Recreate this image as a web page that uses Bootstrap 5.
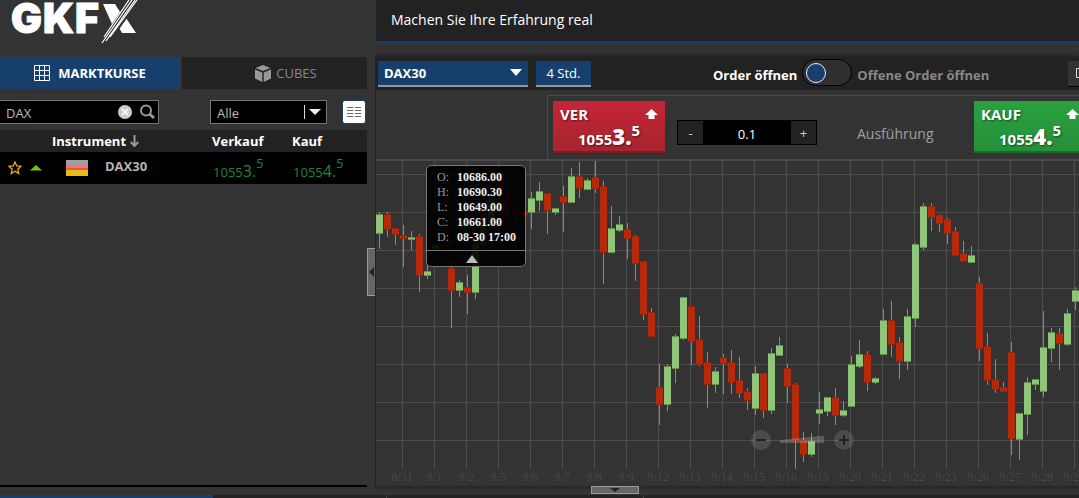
<!DOCTYPE html>
<html lang="de">
<head>
<meta charset="utf-8">
<meta name="viewport" content="width=device-width, initial-scale=1">
<title>GKFX – DAX30</title>
<link href="https://cdn.jsdelivr.net/npm/bootstrap@5.3.0/dist/css/bootstrap.min.css" rel="stylesheet">
<style>
:root{--blue:#163f6d;--bar:#222;--base:#333;--line:#4a4a4a}
body{background:var(--base);color:#fff;font:13px/18px "Open Sans",sans-serif;overflow-x:hidden}
button,input,select{font:inherit;color:inherit;border-radius:0}
svg{display:block}
.side{width:367px;flex:none}
.brandbox{height:57px}
.gutter{width:8px;flex:none}
.tabs{gap:2px}
.tabs button{border:0;height:32px;background:var(--bar);color:#888;flex:1;padding-left:28px}
.tabs button.active{flex:0 0 180px;background:var(--blue);color:#fff;font-weight:700;padding-left:6px}
.filters{padding:11px 1px 6px 0}
.search{width:159px;height:24px;background:#000;border:1px solid #777;border-left:0}
.search input{width:118px;background:none;border:0;padding:4px 6px 2px;color:#bbb;outline:0}
.pick{width:117px;height:24px;background:#000;border:1px solid #777}
.pick select{appearance:none;background:none;border:0;width:93px;padding:3px 6px 1px;color:#bbb}
.viewbtn{width:24px;height:24px;border:1px solid var(--blue);border-radius:3px!important;background:#fff;padding:0;margin-left:15px}
.quotes{table-layout:fixed;width:100%}
.quotes th{background:var(--bar);height:22px;padding:0;font-weight:700}
.quotes td{background:#000;height:32px;padding:0;vertical-align:middle}
.quotes .flag{padding-left:14px}
.quotes .name{color:#b4b4b4;font-weight:700;padding-bottom:4px}
.quotes .rate{color:#22862f;white-space:nowrap;line-height:20px;padding:6px 0 0 1px}
.rate b{font-weight:400;font-size:16px}
.rate sup{font-size:13px;top:-9px}
.side-end{height:2px;background:#000;margin-bottom:8px}
.news{height:43px;background:var(--bar);border-bottom:2px solid var(--blue);font-size:14px;padding:11px 15px;margin-left:1px}
.desk{margin-top:14px;border-left:1px solid #222;box-shadow:0 0 4px #111}
.tools{height:33px;background:var(--bar);padding-left:2px}
.tools .drop{height:26px;background:var(--blue);border:0;border-bottom:2px solid #999;padding:0 6px}
.symbol{width:150px;font-weight:700}
.period{width:55px;margin-left:8px}
.toggle{appearance:none;width:50px;height:27px;border:1px solid #000;border-radius:14px;background:#303030;margin:0 5px 2px;display:flex;align-items:center;padding:0 3px}
.toggle::before{content:"";width:20px;height:20px;border-radius:50%;background:var(--blue);border:1px solid #eee}
.modes{font-weight:700;margin-left:122px;white-space:nowrap}
.modes label,.modes span{padding-top:2px}
.winbtn{width:32px;height:26px;background:#333;border:0;border-bottom:1px solid #000;margin-left:79px;padding:0 8px;flex:none}
.order{height:64px;margin-left:171px;margin-top:5px;border:1px solid var(--line);border-width:1px 0 0 1px;padding:5px 0 0 5px;overflow:hidden}
.deal{width:112px;height:52px;border:0;padding:0 7px;flex:none;text-align:left;text-shadow:1px 1px 2px #0008;font-weight:700}
.sell{background:linear-gradient(#c72438,#a5252f);border-bottom:2px solid #7e1b22}
.buy{background:linear-gradient(#2aa13f,#24903a);border-bottom:2px solid #196b28}
.deal .side-name{font-size:15px;line-height:20px}
.deal .price{font-size:15px;line-height:20px;padding:2px 0 0 18px;white-space:nowrap}
.price b{font-size:22px}
.price sup{font-size:15px;top:-9px}
.stepper{width:140px;height:25px;margin:19px 40px 0 12px;border:1px solid #000;flex:none}
.stepper button{width:25px;border:0;background:var(--bar);padding:0;color:#ccc}
.stepper input{width:88px;border:0;background:#000;text-align:center;padding:2px 0 0}
.exec{width:117px;padding-top:23px;font-size:14px;line-height:20px;color:#a0a0a0;flex:none}
.plot{border-top:2px solid var(--line);height:327px;overflow:hidden}
.plot text{font:12px "Liberation Serif",serif;fill:#484848;text-anchor:middle}
.ohlc{left:50px;top:4px;width:100px;height:102px;background:#000000e8;border:1px solid #777;border-radius:5px;font:12px/15px "Liberation Serif",serif}
.ohlc dl{margin:0;padding:4px 0 5px 10px;display:grid;grid-template-columns:20px 1fr;border-bottom:1px solid #777}
.ohlc dt{font-weight:400;color:#999}
.ohlc dd{margin:0;font-weight:700;white-space:nowrap;color:#eee}
.ohlc svg{margin:4px 0 0 39px}
.fold{background:#666;border:1px solid #999;padding:0}
.fold-left{width:9px;height:48px;margin-top:248px}
.fold-down{width:48px;height:8px;margin-left:216px}
.foot{height:3px;background:var(--bar)}
.foot i{width:213px;background:var(--blue)}
.foot b{width:174px;border-right:1px solid #444}
.foot u{width:257px;border-right:1px solid #444}
</style>
</head>
<body>
<div class="d-flex flex-column min-vh-100">
<div class="d-flex flex-grow-1">
  <aside class="side d-flex flex-column">
    <a class="brandbox" href="#" aria-label="GKFX">
      <svg width="150" height="48">
        <g font-family="Inter,sans-serif" font-weight="900" font-size="41" fill="#fff" stroke="#fff" stroke-width="1"><text x="11" y="33">G</text><text x="43" y="33">K</text><text x="75" y="33">F</text></g>
        <path fill="#fff" d="M103 4h12l5 8-8 12zM117 24l7-9 12 18h-14z"/>
        <path stroke="#333" stroke-width="9" d="M106 40 136-2"/>
        <path stroke="#fff" stroke-width="1.2" d="M104 37 129 0M102 43 132 0M106 41 135 0M110 37 137 0"/>
      </svg>
    </a>
    <div class="tabs d-flex">
      <button class="active d-flex align-items-center justify-content-center gap-2" type="button"><svg width="16" height="16" fill="none" stroke="#fff"><path d="M.5.5h15v15H.5zM5.5 0v16M10.500 0v16M0 5.500h16M0 10.500h16"/></svg>MARKTKURSE</button>
      <button class="d-flex align-items-center justify-content-center" type="button"><svg class="me-1" width="18" height="17" fill="#999"><path d="m9 0 7.500 3L9 6 1.500 3zM1 4.500l7.300 3V17L1 13.500zM17 4.500l-7.300 3V17l7.300-3.500z"/></svg>CUBES</button>
    </div>
    <div class="filters d-flex">
      <div class="search d-flex align-items-center"><input type="text" value="DAX" aria-label="Instrument suchen">
        <svg width="38" height="18" fill="none"><circle cx="7" cy="9" r="7" fill="#ccc"/><path d="m4 6 6 6m0-6-6 6" stroke="#fff" stroke-width="1.500"/><circle cx="28" cy="7.500" r="5" stroke="#999" stroke-width="2"/><path d="m31.500 11 4.500 4" stroke="#999" stroke-width="3"/></svg></div>
      <div class="pick d-flex align-items-center ms-auto"><select aria-label="Filter"><option>Alle</option></select><svg width="22" height="16"><path d="M.5 1v14" stroke="#ddd"/><path d="M5 5h12l-6 6z" fill="#eee"/></svg></div>
      <button class="viewbtn d-flex align-items-center justify-content-center" type="button" aria-label="Ansicht"><svg width="14" height="10" stroke="#666"><path d="M0 .5h6.500M0 3.500h6.500M0 6.500h6.500M0 9.500h6.500M8 .5h6M8 3.500h6M8 6.500h6M8 9.500h6"/></svg></button>
    </div>
    <table class="quotes">
      <colgroup><col style="width:52px"><col style="width:53px"><col style="width:107px"><col style="width:80px"><col></colgroup>
      <thead><tr><th></th><th colspan="2"><span class="d-flex align-items-center">Instrument<svg class="ms-1" width="9" height="12" stroke="#999" fill="none" stroke-width="2"><path d="M4.500 0v10M.8 7l3.700 4 3.700-4"/></svg></span></th><th>Verkauf</th><th>Kauf</th></tr></thead>
      <tbody><tr>
        <td><span class="d-flex align-items-center ps-2"><svg width="14" height="14" fill="none" stroke="#f0a818" stroke-width="1.300"><path d="m7 1 1.700 4 4.300.4-3.200 2.900 1 4.300L7 10.300l-3.800 2.300 1-4.300L1 5.400 5.300 5z"/></svg><svg class="ms-2" width="12" height="6"><path d="M0 5.500 6 0l6 5.500z" fill="#7ac300"/></svg></span></td>
        <td class="flag"><svg width="22" height="16"><path fill="#888" d="M0 0h22v5H0z"/><path fill="#f05050" d="M0 5h22v5H0z"/><path fill="#e8bb18" d="M0 10h22v6H0z"/><path fill="#fff" fill-opacity=".2" d="M0 0h22v8H0z"/></svg></td>
        <td class="name">DAX30</td>
        <td class="rate">1055<b>3.</b><sup>5</sup></td><td class="rate">1055<b>4.</b><sup>5</sup></td>
      </tr></tbody>
    </table>
    <div class="side-end mt-auto"></div>
  </aside>
  <div class="gutter d-flex align-items-start"><button class="fold fold-left" type="button" aria-label="Einklappen"><svg width="7" height="10"><path d="M6 0v10L1 5z" fill="#222"/></svg></button></div>
  <main class="flex-grow-1 overflow-hidden">
    <div class="news">Machen Sie Ihre Erfahrung real</div>
    <section class="desk">
      <div class="tools d-flex align-items-center">
        <button class="drop symbol d-flex align-items-center justify-content-between flex-shrink-0" type="button">DAX30<svg width="12" height="7"><path d="M0 0h12L6 7z" fill="#fff"/></svg></button>
        <button class="drop period flex-shrink-0" type="button">4 Std.</button>
        <div class="modes d-flex align-items-center"><label for="mode">Order öffnen</label><input class="toggle" id="mode" type="checkbox" role="switch"><span style="color:#888">Offene Order öffnen</span></div>
        <button class="winbtn" type="button" aria-label="Fenster"><svg width="12" height="12" fill="none" stroke="#ddd"><path d="M.5 1.500h9v9h-9z"/></svg></button>
      </div>
      <div class="order d-flex align-items-start">
        <button class="deal sell" type="button"><span class="side-name d-flex justify-content-between align-items-center">VER<svg width="13" height="10" fill="#fff"><path d="M6.500 0 13 6H9.500v4h-6V6H0z"/></svg></span><span class="price d-block">1055<b>3.</b><sup>5</sup></span></button>
        <div class="stepper d-flex"><button type="button">-</button><input type="text" value="0.1" aria-label="Menge"><button type="button">+</button></div>
        <div class="exec">Ausführung</div>
        <button class="deal buy" type="button"><span class="side-name d-flex justify-content-between align-items-center">KAUF<svg width="13" height="10" fill="#fff"><path d="M6.500 0 13 6H9.500v4h-6V6H0z"/></svg></span><span class="price d-block">1055<b>4.</b><sup>5</sup></span></button>
      </div>
      <div class="plot position-relative">
        <svg id="chart" width="100%" height="325"></svg>
        <div class="ohlc position-absolute"><dl><dt>O:</dt><dd>10686.00</dd><dt>H:</dt><dd>10690.30</dd><dt>L:</dt><dd>10649.00</dd><dt>C:</dt><dd>10661.00</dd><dt>D:</dt><dd>08-30 17:00</dd></dl><svg width="12" height="8"><path d="m6 0 6 8H0z" fill="#bbb"/></svg></div>
      </div>
    </section>
    <button class="fold fold-down d-flex justify-content-center" type="button" aria-label="Ausklappen"><svg width="10" height="5"><path d="M0 1h10L5 5z" fill="#222"/></svg></button>
  </main>
</div>
<div class="foot d-flex"><i></i><b></b><u></u></div>
</div>
<script src="https://cdn.jsdelivr.net/npm/bootstrap@5.3.0/dist/js/bootstrap.bundle.min.js"></script>
<script>
// One candle per 8px step: body top, body bottom, wick top, wick bottom, colour
const candles = `214 233 212 249 g|214 229 212 237 r|228 234 228 245 r|235 238 225 267 r|237 239 231 250 g|236 275 234 292 r|271 275 265 279 g
244 249 244 249 g|244 249 244 249 r|268 290 260 328 r|282 290 280 297 g|287 292 275 314 r|244 292 240 299 g|218 245 214 250 g|198 222 194 226 g
181 194 178 200 r|196 211 192 215 r|211 214 209 224 r|211 215 208 218 r|198 212 192 229 g|191 200 182 211 g|193 210 193 234 r|208 212 208 215 g
196 202 186 232 r|176 202 168 203 g|176 188 162 198 r|180 189 178 190 g|177 188 160 193 r|186 252 181 284 r|228 252 206 253 g|224 230 216 232 g
229 238 223 259 r|236 263 235 281 r|261 314 261 320 r|312 336 308 336 r|387 404 364 425 r|366 404 364 411 g|336 368 334 383 g|297 338 297 340 g
306 341 306 365 r|339 364 316 366 r|362 384 352 408 r|371 384 367 393 g|357 363 354 394 r|362 382 350 394 r|380 393 357 398 r|391 400 388 410 r
373 408 366 415 g|373 410 373 418 r|353 410 348 414 g|345 355 337 356 g|368 386 364 403 r|384 440 383 469 r|440 454 432 462 r|441 454 433 457 g
409 413 392 424 g|397 411 397 416 g|397 415 388 425 r|410 415 401 417 g|364 406 356 406 g|354 366 340 368 g|354 382 351 391 r|378 382 377 384 g
320 354 309 355 g|320 344 301 357 r|342 361 337 379 r|316 361 309 370 g|244 318 243 327 g|206 247 203 250 g|206 217 203 231 r|215 223 214 232 r
219 233 218 244 r|231 255 227 255 r|253 261 241 262 r|255 262 246 262 g|283 348 277 361 r|346 380 333 385 r|379 389 359 393 r|387 391 382 392 r
352 438 342 455 r|413 439 413 460 g|382 414 377 435 g|379 384 379 390 g|347 391 311 397 g|332 348 328 362 g|333 343 328 370 r|313 344 309 346 g|290 301 287 310 g`.split(/[|\n]/);
const dates = '8/31 9/1 9/2 9/5 9/6 9/7 9/8 9/9 9/12 9/13 9/14 9/15 9/16 9/19 9/20 9/21 9/22 9/23 9/26 9/27 9/28 9/29'.split(' ');
const top0 = 161;
let s = '';
for (let y = 174; y < 450; y += 38) s += `<rect x="0" y="${y - top0}" width="100%" height="1" fill="#4d4d4d"/>`;
dates.forEach((d, i) => {
  const x = 26 + 32 * i;
  s += `<rect x="${x}" y="0" width="1" height="308" fill="#4d4d4d"/><text x="${x}" y="320">${d}</text>`;
});
candles.forEach((c, i) => {
  const [a, b, h, l, k] = c.split(' '), x = i * 8;
  const fill = k === 'g' ? '#8fc578' : '#b7290b', edge = k === 'g' ? '#64904f' : '#8a2612';
  s += `<rect x="${x + 3}" y="${h - top0}" width="1" height="${l - h}" fill="#888"/>`;
  s += `<rect x="${x}" y="${a - top0}" width="7" height="${+b - a + 1}" fill="${edge}"/><rect x="${x}" y="${a - top0 + 1}" width="7" height="${Math.max(1, b - a - 1)}" fill="${fill}"/>`;
});
// Zoom slider
s += `<g fill="#fff" fill-opacity=".12"><circle cx="385" cy="279" r="10"/><circle cx="468" cy="279" r="10"/><path d="M404 279l40-4h4v7h-44z" fill-opacity=".2"/></g><path d="M380 279h10M463 279h10M468 274v10" stroke="#222" stroke-width="2"/>`;
document.getElementById('chart').innerHTML = s;
</script>
</body>
</html>
